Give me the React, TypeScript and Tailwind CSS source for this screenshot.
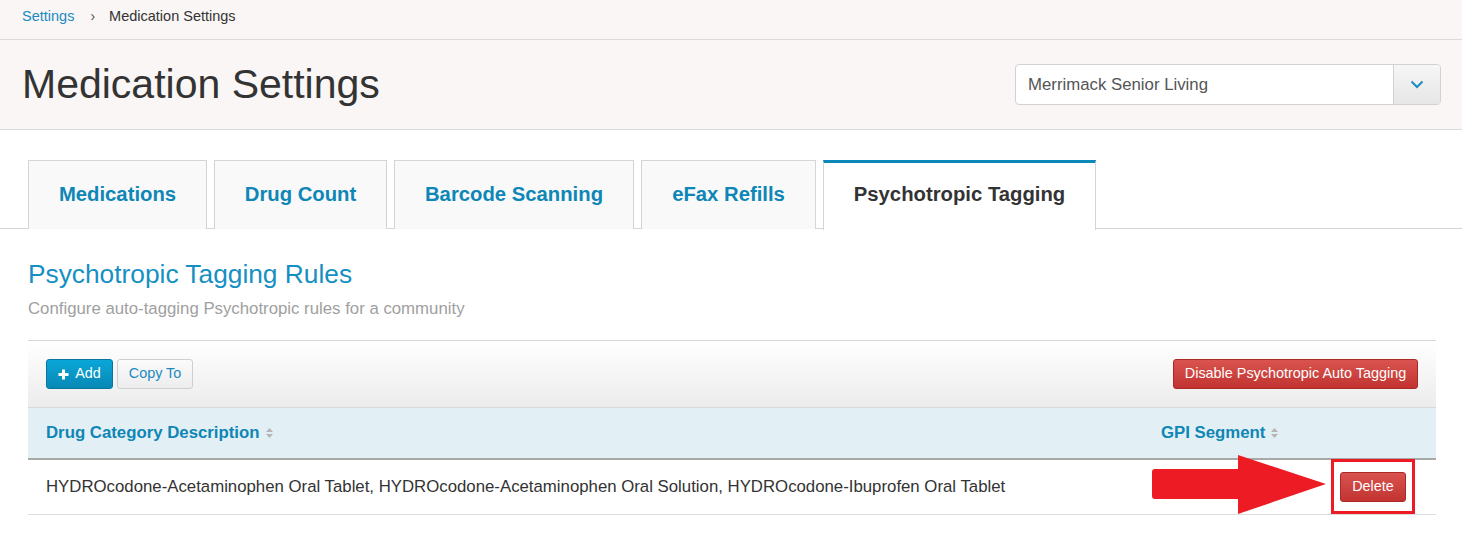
const SortIcon = () => (
  <svg width="9" height="12" viewBox="0 0 9 12" className="ml-[5px] inline-block">
    <path d="M4.5 1 L8 5 L1 5 Z" fill="#b5b5b5" />
    <path d="M4.5 11 L8 7 L1 7 Z" fill="#b5b5b5" />
  </svg>
)

const tabs = [
  { label: 'Medications', w: 'w-[179px]' },
  { label: 'Drug Count', w: 'w-[173px]' },
  { label: 'Barcode Scanning', w: 'w-[240px]' },
  { label: 'eFax Refills', w: 'w-[175px]' },
]

const App = () => {
  return (
    <div className="w-full min-h-[542px] bg-white font-['Liberation_Sans',Arial,sans-serif] relative">
      {/* breadcrumb */}
      <div className="h-[40px] bg-[#f9f6f5] border-b border-[#dcdad9] flex items-center px-[22px] pb-[6px] text-[14.5px]">
        <span className="text-[#1a8ac0]">Settings</span>
        <span className="text-[#555] ml-[16px] mr-[14px] text-[14px]">›</span>
        <span className="text-[#333]">Medication Settings</span>
      </div>

      {/* page header */}
      <div className="h-[90px] bg-[#f9f6f5] border-b border-[#dcdad9] flex items-center justify-between pl-[22px] pr-[21px]">
        <h1 className="text-[41px] text-[#333] leading-none">Medication Settings</h1>
        <div className="w-[426px] h-[41px] flex border border-[#d2d2d2] rounded-[4px] bg-white overflow-hidden">
          <div className="flex-1 flex items-center pl-[12px] text-[16.8px] text-[#555]">Merrimack Senior Living</div>
          <div className="w-[47px] border-l border-[#d2d2d2] bg-gradient-to-b from-[#f6f6f6] to-[#e6e6e6] flex items-center justify-center">
            <svg width="14" height="9" viewBox="0 0 14 9">
              <path d="M1.5 1.5 L7 7 L12.5 1.5" stroke="#1b8dc2" strokeWidth="2" fill="none" />
            </svg>
          </div>
        </div>
      </div>

      {/* tabs */}
      <div className="mt-[30px] flex gap-[7px] pl-[28px] border-b border-[#d5d5d5] h-[69px]">
        {tabs.map((t) => (
          <div
            key={t.label}
            className={`${t.w} h-[69px] bg-[#f9f9f9] border border-b-0 border-[#d5d5d5] flex items-center justify-center text-[20.3px] font-bold text-[#0e86b6] pb-[2px]`}
          >
            {t.label}
          </div>
        ))}
        <div className="w-[273px] h-[70px] bg-white border-x border-[#d5d5d5] border-t-[3px] border-t-[#0a88b8] flex items-center justify-center text-[20.3px] font-bold text-[#333] pb-[4px]">
          Psychotropic Tagging
        </div>
      </div>

      {/* section */}
      <div className="pl-[28px] pr-[26px]">
        <h2 className="mt-[30px] text-[26.3px] text-[#1690c3] leading-[30px]">Psychotropic Tagging Rules</h2>
        <p className="mt-[10px] text-[16.8px] text-[#a0a0a0] leading-[20px]">Configure auto-tagging Psychotropic rules for a community</p>

        <div className="mt-[21px]">
          {/* toolbar */}
          <div className="h-[68px] border-t border-b border-[#d8d8d8] bg-gradient-to-b from-white to-[#ececec] flex items-center justify-between pl-[18px] pr-[18px]">
            <div className="flex gap-[4px]">
              <button className="h-[30px] w-[67px] rounded-[3px] border border-[#0876a1] bg-gradient-to-b from-[#0aa7d9] to-[#0788b5] text-white text-[14.4px] flex items-center justify-center gap-[6px]">
                <svg width="11" height="11" viewBox="0 0 11 11">
                  <path d="M5.5 0.5 V10.5 M0.5 5.5 H10.5" stroke="white" strokeWidth="3" />
                </svg>
                Add
              </button>
              <button className="h-[30px] w-[76px] rounded-[3px] border border-[#cfcfcf] bg-gradient-to-b from-[#fbfbfb] to-[#ededed] text-[#1a8ac0] text-[14.4px]">
                Copy To
              </button>
            </div>
            <button className="h-[30px] w-[245px] rounded-[3px] border border-[#ac2925] bg-gradient-to-b from-[#d9534f] to-[#c13330] text-white text-[14.4px]">
              Disable Psychotropic Auto Tagging
            </button>
          </div>

          {/* header row */}
          <div className="h-[52px] bg-[#e2f0f5] border-b-2 border-[#a8a8a8] flex items-center text-[16.8px] font-bold text-[#0e86b6]">
            <div className="flex-1 pl-[18px] flex items-center">
              Drug Category Description
              <SortIcon />
            </div>
            <div className="w-[293px] pl-[18px] flex items-center">
              GPI Segment
              <SortIcon />
            </div>
          </div>

          {/* data row */}
          <div className="h-[55px] border-b border-[#dddddd] flex items-center text-[16.8px] text-[#333]">
            <div className="flex-1 pl-[18px]">
              HYDROcodone-Acetaminophen Oral Tablet, HYDROcodone-Acetaminophen Oral Solution, HYDROcodone-Ibuprofen Oral Tablet
            </div>
            <div className="w-[293px] flex justify-end pr-[30px]">
              <button className="h-[30px] w-[66px] rounded-[3px] border border-[#ac2925] bg-gradient-to-b from-[#d9534f] to-[#c13330] text-white text-[14.4px]">
                Delete
              </button>
            </div>
          </div>
        </div>
      </div>

      {/* annotation overlay */}
      <div className="absolute left-[1331px] top-[459px] w-[84px] h-[55px] border-[3px] border-[#ed1c24]" />
      <svg className="absolute left-[1150px] top-[454px]" width="180" height="62" viewBox="0 0 180 62">
        <path d="M5 15 H88 V1 L176 30 L88 60 V45 H5 Q2 45 2 42 V18 Q2 15 5 15 Z" fill="#ed1c24" />
      </svg>
    </div>
  )
}

export default App
